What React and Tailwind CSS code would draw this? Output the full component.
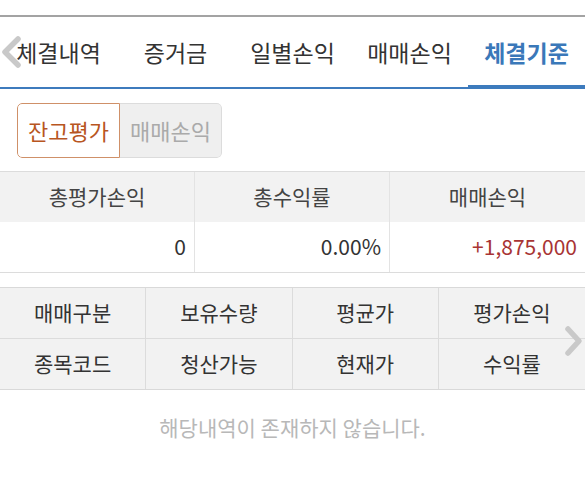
import React, { useState } from "react";

const tabs = ["체결내역", "증거금", "일별손익", "매매손익", "체결기준"];

const summary = [
  { label: "총평가손익", value: "0" },
  { label: "총수익률", value: "0.00%" },
  { label: "매매손익", value: "+1,875,000", red: true },
];

const columns = [
  ["매매구분", "종목코드"],
  ["보유수량", "청산가능"],
  ["평균가", "현재가"],
  ["평가손익", "수익률"],
];

function App() {
  const [activeTab, setActiveTab] = useState(4);
  const [mode, setMode] = useState("balance");

  return (
    <div className="relative w-full min-h-screen bg-white font-['Noto_Sans_CJK_KR','Noto_Sans',sans-serif] text-[#333]">
      <div className="h-[15px]" />
      <div className="h-[2px] bg-[#a3a3a3]" />

      {/* tab bar */}
      <div className="relative">
        <div className="grid grid-cols-5 h-[70px]">
          {tabs.map((tab, i) => (
            <button
              key={tab}
              onClick={() => setActiveTab(i)}
              className={`flex items-center justify-center text-[23px] leading-none ${
                activeTab === i ? "text-[#3a78b9] font-bold" : "text-[#333]"
              }`}
            >
              {tab}
            </button>
          ))}
        </div>
        <div className="relative h-[2px] bg-[#3d7bbd]">
          <div
            className="absolute bottom-0 h-[4px] w-1/5 bg-[#3d7bbd]"
            style={{ left: `${activeTab * 20}%` }}
          />
        </div>
        <svg
          className="absolute left-0 top-[19px]"
          width="22"
          height="32"
          viewBox="0 0 22 32"
        >
          <polyline
            points="18,3 5,16 18,29"
            fill="none"
            stroke="#c9c9c9"
            strokeWidth="5.5"
            strokeLinecap="round"
            strokeLinejoin="round"
          />
        </svg>
      </div>

      {/* toggle */}
      <div className="mt-[14px] ml-[17px] flex w-[205px] h-[55px] rounded-[5px] overflow-hidden">
        <button
          onClick={() => setMode("balance")}
          className={`w-[103px] flex items-center justify-center text-[22px] rounded-l-[5px] border ${
            mode === "balance"
              ? "bg-white border-[#cf9068] text-[#b8561f]"
              : "bg-[#efefef] border-[#dcdcdc] text-[#aaa]"
          }`}
        >
          잔고평가
        </button>
        <button
          onClick={() => setMode("trade")}
          className={`w-[102px] flex items-center justify-center text-[22px] rounded-r-[5px] border ${
            mode === "trade"
              ? "bg-white border-[#cf9068] text-[#b8561f]"
              : "bg-[#efefef] border-[#dcdcdc] border-l-0 text-[#aaa]"
          }`}
        >
          매매손익
        </button>
      </div>

      {/* summary */}
      <div className="mt-[13px] border-t border-b border-[#dcdcdc] grid grid-cols-3">
        {summary.map((s, i) => (
          <div
            key={s.label}
            className={`flex flex-col ${i < 2 ? "border-r border-[#e3e3e3]" : ""}`}
          >
            <div className="h-[50px] bg-[#f2f2f2] flex items-center justify-center text-[21px] text-[#444]">
              {s.label}
            </div>
            <div
              className={`h-[50px] flex items-center justify-end pr-[8px] text-[21px] ${
                s.red ? "text-[#a83434]" : "text-[#333]"
              }`}
            >
              {s.value}
            </div>
          </div>
        ))}
      </div>

      {/* list header */}
      <div className="relative mt-[14px] border-t border-b border-[#d9d9d9] bg-[#f2f2f2] grid grid-cols-4">
        {columns.map((col, i) => (
          <div
            key={col[0]}
            className={`flex flex-col ${i < 3 ? "border-r border-[#dcdcdc]" : ""}`}
          >
            <div className="h-[51px] flex items-center justify-center text-[21px] border-b border-[#dcdcdc]">
              {col[0]}
            </div>
            <div className="h-[50px] flex items-center justify-center text-[21px]">
              {col[1]}
            </div>
          </div>
        ))}
        <svg
          className="absolute right-0 top-[37px]"
          width="22"
          height="32"
          viewBox="0 0 22 32"
        >
          <polyline
            points="5,4 16,16 5,28"
            fill="none"
            stroke="#c9c9c9"
            strokeWidth="5.5"
            strokeLinecap="round"
            strokeLinejoin="round"
          />
        </svg>
      </div>

      <p className="mt-[22px] text-center text-[21px] text-[#b8b8b8]">
        해당내역이 존재하지 않습니다.
      </p>
    </div>
  );
}

export default App;
